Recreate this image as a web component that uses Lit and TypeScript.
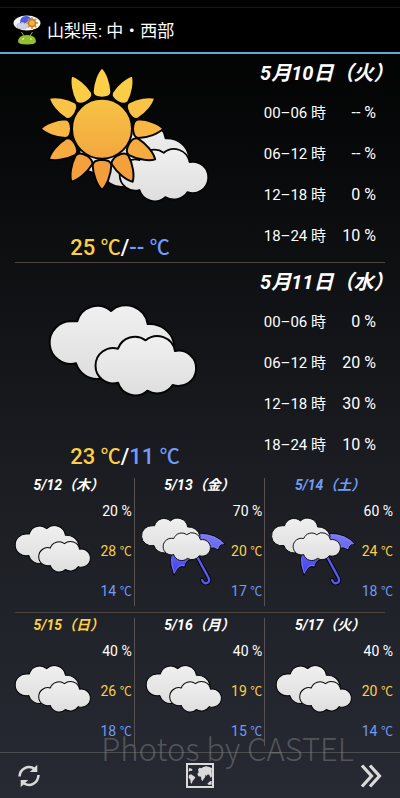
import { LitElement, html, svg, css } from "lit";
import { customElement, property } from "lit/decorators.js";

type Sky = "sun-cloud" | "cloud" | "cloud-rain";

interface Today {
  date: string;
  sky: Sky;
  high: string;
  low: string;
  hours: [string, string][];
}

interface Daily {
  date: string;
  kind: "weekday" | "saturday" | "sunday";
  sky: Sky;
  rain: string;
  high: string;
  low: string;
}

const NEAR: Today[] = [
  {
    date: "5月10日（火）", sky: "sun-cloud", high: "25", low: "--",
    hours: [["00–06 時", "-- %"], ["06–12 時", "-- %"], ["12–18 時", "0 %"], ["18–24 時", "10 %"]],
  },
  {
    date: "5月11日（水）", sky: "cloud", high: "23", low: "11",
    hours: [["00–06 時", "0 %"], ["06–12 時", "20 %"], ["12–18 時", "30 %"], ["18–24 時", "10 %"]],
  },
];

const WEEK: Daily[][] = [
  [
    { date: "5/12（木）", kind: "weekday", sky: "cloud", rain: "20", high: "28", low: "14" },
    { date: "5/13（金）", kind: "weekday", sky: "cloud-rain", rain: "70", high: "20", low: "17" },
    { date: "5/14（土）", kind: "saturday", sky: "cloud-rain", rain: "60", high: "24", low: "18" },
  ],
  [
    { date: "5/15（日）", kind: "sunday", sky: "cloud", rain: "40", high: "26", low: "18" },
    { date: "5/16（月）", kind: "weekday", sky: "cloud", rain: "40", high: "19", low: "15" },
    { date: "5/17（火）", kind: "weekday", sky: "cloud", rain: "40", high: "20", low: "14" },
  ],
];

const gradients = svg`
  <defs>
    <linearGradient id="cloud" x1="0" y1="0" x2="0" y2="1">
      <stop offset="0" stop-color="#f0f0f0"></stop>
      <stop offset="1" stop-color="#dedede"></stop>
    </linearGradient>
    <linearGradient id="sun" x1="0" y1="0" x2="0" y2="1">
      <stop offset="0" stop-color="#f7c445"></stop>
      <stop offset="1" stop-color="#f3a63f"></stop>
    </linearGradient>
    <linearGradient id="umbrella" x1="0" y1="0" x2="0" y2="1">
      <stop offset="0" stop-color="#7c7cf4"></stop>
      <stop offset="1" stop-color="#4040ee"></stop>
    </linearGradient>
  </defs>`;

const clouds = svg`
  <g fill="url(#cloud)" stroke="#050505" stroke-width="6" stroke-linejoin="round">
    <path d="M142 124A62 62 0 0 1 243 93A66 66 0 0 1 353 132A74 74 0 0 1 432 190L420 270L206 297A66 66 0 0 1 138 250A64 64 0 1 1 128 124Z"></path>
    <path d="M264 206A54 54 0 0 1 347 181A54 54 0 0 1 435 213A53 53 0 1 1 428 315A56 56 0 0 1 352 332A54 54 0 0 1 264 308A53 53 0 1 1 264 206Z"></path>
  </g>`;

const rayColor = (angle: number) => {
  const t = (1 - Math.cos((angle * Math.PI) / 180)) / 2;
  const mix = (a: number, b: number) => Math.round(a + (b - a) * t);
  return `rgb(${mix(251, 243)},${mix(208, 158)},${mix(72, 60)})`;
};

const rays = Array.from({ length: 12 }, (_, i) => i * 30);

const sun = svg`
  <g stroke="#050505" stroke-width="6" stroke-linejoin="round">
    ${rays.map((a) => svg`
      <path transform="rotate(${a} 216 206)" fill=${rayColor(a)}
        d="M216 22C231 36 243 68 244 96Q243 112 216 113Q189 112 188 96C189 68 201 36 216 22Z"></path>`)}
    <circle cx="216" cy="206" r="90" fill="url(#sun)"></circle>
  </g>`;

const umbrella = svg`
  <path d="M380 270L415 335Q424 349 418 355Q406 363 399 348" fill="none" stroke="#050505" stroke-width="13" stroke-linecap="round"></path>
  <path d="M380 270L415 335Q424 349 418 355Q406 363 399 348" fill="none" stroke="#5a5af2" stroke-width="7" stroke-linecap="round"></path>
  <path d="M305 280Q320 210 390 209Q442 207 468 241Q452 237 448 259Q432 244 414 258L372 287Q352 284 347 310Q328 300 315 334Q302 305 305 280Z"
    fill="url(#umbrella)" stroke="#050505" stroke-width="3" stroke-linejoin="round"></path>
  <path d="M307 284Q309 308 316 328Q329 297 346 305M396 211Q440 212 464 239Q450 238 446 254Q434 244 424 250" fill="none" stroke="#8d8df8" stroke-width="2"></path>`;

function skyIcon(sky: Sky, size: "large" | "small") {
  if (sky === "sun-cloud") {
    return html`<svg class="sky" viewBox="33 0 504 504" role="img" aria-label="晴れ時々曇り">
      ${gradients}<g transform="translate(96 119) scale(.88)">${clouds}</g>${sun}</svg>`;
  }
  if (sky === "cloud-rain") {
    return html`<svg class="sky" viewBox="213 123 264 264" role="img" aria-label="曇り時々雨">
      ${gradients}${umbrella}<g transform="translate(190 127) scale(.47)">${clouds}</g></svg>`;
  }
  return html`<svg class="sky" viewBox=${size === "large" ? "33 -33 504 504" : "23 -45 514 514"} role="img" aria-label="曇り">
    ${gradients}${clouds}</svg>`;
}

const FONT = css`Roboto, "Noto Sans CJK JP", sans-serif`;

@customElement("day-panel")
class DayPanel extends LitElement {
  @property({ attribute: false }) day!: Today;

  static styles = css`
    :host { display: grid; grid-template-columns: 5fr 3fr; }
    .left { display: flex; flex-direction: column; align-items: center; padding-top: 6px; }
    .sky { display: block; width: 168px; height: 168px; }
    .temps {
      display: grid; grid-template-columns: 1fr auto 1fr; align-self: stretch;
      margin: 6px 0 0; font-size: 22px; line-height: 28px; font-weight: 500;
    }
    .unit { font-size: 20px; line-height: 20px; }
    .high { color: #fdcf45; text-align: right; }
    .low { color: #709bfa; }
    .date { margin: 0; padding-left: 10px; font-size: 20px; line-height: 38px; font-style: italic; font-weight: 700; white-space: nowrap; }
    .hours { margin-left: auto; margin-right: 24px; border-collapse: collapse; line-height: 20px; white-space: nowrap; }
    .hours th, .hours td { height: 41px; padding: 0; font-weight: 400; text-align: right; }
    .hours th { font-size: 15px; }
    .hours td { width: 50px; font-size: 16px; }
  `;

  render() {
    const d = this.day;
    return html`
      <div class="left">
        ${skyIcon(d.sky, "large")}
        <p class="temps">
          <span class="high">${d.high} <span class="unit">℃</span></span><span>/</span><span class="low">${d.low} <span class="unit">℃</span></span>
        </p>
      </div>
      <div>
        <h2 class="date">${d.date}</h2>
        <table class="hours">
          ${d.hours.map(([h, p]) => html`<tr><th scope="row">${h}</th><td>${p}</td></tr>`)}
        </table>
      </div>`;
  }
}

@customElement("day-card")
class DayCard extends LitElement {
  @property({ attribute: false }) day!: Daily;

  static styles = css`
    :host { display: block; }
    .date { margin: 0; font-size: 14px; line-height: 14px; font-style: italic; font-weight: 700; text-align: center; white-space: nowrap; }
    .saturday { color: #709bfa; }
    .sunday { color: #fdcf45; }
    .body { display: flex; align-items: center; justify-content: space-between; padding-left: 5px; }
    .sky { display: block; flex: none; width: 88px; height: 88px; }
    .values { list-style: none; margin: 0; padding: 9px 2px 5px 0; display: grid; gap: 20px; font-size: 14px; line-height: 20px; text-align: right; white-space: nowrap; }
    .unit { font-size: 12px; line-height: 12px; }
    .high { color: #fdcf45; }
    .low { color: #709bfa; }
  `;

  render() {
    const d = this.day;
    return html`
      <h3 class="date ${d.kind}">${d.date}</h3>
      <div class="body">
        ${skyIcon(d.sky, "small")}
        <ul class="values">
          <li>${d.rain} %</li>
          <li class="high">${d.high} <span class="unit">℃</span></li>
          <li class="low">${d.low} <span class="unit">℃</span></li>
        </ul>
      </div>`;
  }
}

@customElement("app-root")
class AppRoot extends LitElement {
  static styles = css`
    :host {
      display: flex; flex-direction: column; position: relative; min-height: 100vh; box-sizing: border-box;
      color: #fff; font-family: ${FONT};
      background: linear-gradient(#000 0, #08090a 20%, #1b1d22 60%, #272a33 100%);
    }
    .status { height: 7px; border-bottom: 1px solid #161616; background: #020202; }
    .bar { display: flex; align-items: center; gap: 6px; height: 44px; padding-left: 13px; border-bottom: 2px solid #62a9d6; background: #000; }
    .logo { display: block; width: 28px; height: 30px; }
    .place { margin: 0; padding-top: 2px; font-size: 17px; line-height: 24px; font-weight: 400; }
    .rule { height: 1px; margin: 0 15px; border: 0; background: #4a423c; }
    .week { margin-top: 2px; }
    .row { display: grid; grid-template-columns: repeat(3, 1fr); padding: 5px 4px 6px; }
    .cell { border-right: 1px solid #57524f; }
    .cell:last-child { border-right-color: transparent; }
    .tools { display: flex; flex: 1; align-items: center; justify-content: space-between; padding: 0 17px; border-top: 1px solid #4c4d50; }
    .tool { display: block; padding: 0; border: 0; background: none; color: #dadada; }
    .tool svg { display: block; }
    .mark {
      position: absolute; right: 46px; bottom: 28px; margin: 0; color: rgba(150, 150, 150, 0.42);
      font: 300 31px/44px "Noto Sans CJK JP", sans-serif; white-space: nowrap; pointer-events: none;
    }
  `;

  render() {
    return html`
      <div class="status"></div>
      <header class="bar">
        <svg class="logo" viewBox="0 0 28 30" aria-hidden="true">
          <ellipse cx="14" cy="8" rx="13.500" ry="7.500" fill="#f4f4f4"></ellipse>
          <path d="M7 8Q7 1 13 1Q17 1 18 4L10 10Z" fill="#4a5bea"></path>
          <g stroke="#c07a20" stroke-width="1.500">
            <path d="M19 2V14M13 8H25M14.800 3.800L23.200 12.200M23.200 3.800L14.800 12.200" stroke="#d88b26"></path>
            <circle cx="19" cy="8" r="3.500" fill="#f6b13c"></circle>
          </g>
          <path d="M4 12Q3 8 7 8.500Q10 6 12 9Q16 9 15 12Q12 15 8 13.500Q5 14 4 12Z" fill="#d0d3e0" stroke="#a9aab4" stroke-width=".5"></path>
          <path d="M8.500 17L11 21M19.500 17L17 21" stroke="#8fb82c" stroke-width="1"></path>
          <path d="M5 27Q5 20 14 20Q23 20 23 27Q22 29.500 14 29.500Q6 29.500 5 27Z" fill="#93c02f"></path>
          <circle cx="10" cy="24" r=".8" fill="#fff"></circle>
          <circle cx="18" cy="24" r=".8" fill="#fff"></circle>
        </svg>
        <h1 class="place">山梨県: 中・西部</h1>
      </header>
      <main>
        <day-panel .day=${NEAR[0]}></day-panel>
        <hr class="rule">
        <day-panel .day=${NEAR[1]}></day-panel>
        <section class="week">
          ${WEEK.map((row, i) => html`
            ${i ? html`<hr class="rule">` : ""}
            <div class="row">${row.map((d) => html`<day-card class="cell" .day=${d}></day-card>`)}</div>`)}
        </section>
      </main>
      <nav class="tools">
        <button class="tool" aria-label="更新">
          <svg width="24" height="24" viewBox="0 0 24 24" fill="none" stroke="currentColor" stroke-width="2.600">
            <path d="M2.500 12.500C3 4.500 11 .5 18 5"></path>
            <path d="M21.500 11C21 19.500 13 23.500 6 19"></path>
            <path d="M20.300 .8V8H12.800ZM3.700 23.200V16H11.200Z" fill="currentColor" stroke="none"></path>
          </svg>
        </button>
        <button class="tool" aria-label="地図">
          <svg width="28" height="25" viewBox="0 0 84 75" fill="currentColor">
            <path d="M0 0H84V75H0ZM6 6V69H78V6Z" fill-rule="evenodd"></path>
            <path d="M8 20L10 15L17 17L20 21L16 24L12 23L8 27ZM9 36L15 34L22 38L28 43L25 48L20 54L17 62L14 60L13 50L8 44Z"></path>
            <path d="M36 20L40 14L46 16L52 12L60 10L70 12L78 16L77 25L78 40L74 45L70 36L66 34L62 38L57 36L58 41L53 48L50 54L46 50L45 41L37 40L34 33L38 28ZM64 62L72 55L77 54V65H67Z"></path>
          </svg>
        </button>
        <button class="tool" aria-label="次へ">
          <svg width="24" height="24" viewBox="0 0 24 24" fill="none" stroke="currentColor" stroke-width="3.200">
            <path d="M3 1.500L12.500 12L3 22.500M11 1.500L20.500 12L11 22.500"></path>
          </svg>
        </button>
      </nav>
      <p class="mark">Photos by CASTEL</p>`;
  }
}
